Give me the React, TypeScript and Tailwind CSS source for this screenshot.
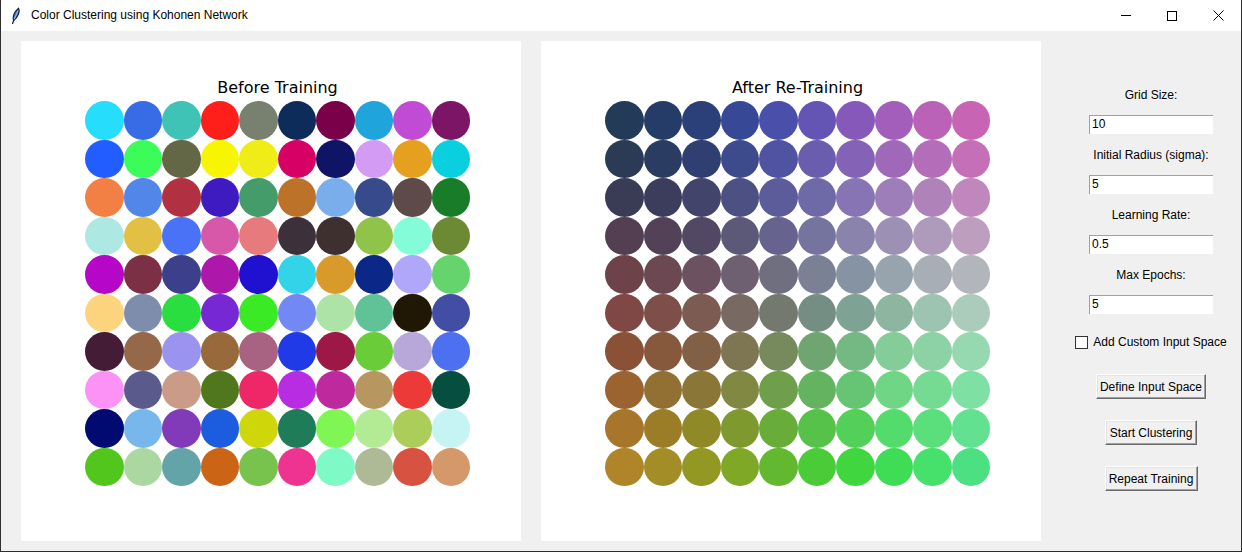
import React from "react";

const leftColors: string[][] = [
  ["#26DDFB", "#386BE6", "#3FC3B7", "#FF1F1A", "#788070", "#0E2C5A", "#7A0049", "#1FA5DB", "#C04BD4", "#7C1566"],
  ["#225DFF", "#3CFC5A", "#636745", "#F7F500", "#EFEC17", "#D70064", "#0F1466", "#D49BF5", "#E5A020", "#0ACFDE"],
  ["#F28045", "#5286E8", "#B13142", "#3E1AC1", "#449C6A", "#BD722A", "#7AADEC", "#364A8C", "#5D4A49", "#187C28"],
  ["#ADE8E2", "#E2C044", "#4A72F6", "#D757A8", "#E67A7C", "#3C303A", "#3E302F", "#8FC34A", "#84FCD8", "#6B8A33"],
  ["#B607C9", "#7B3045", "#3C3F8A", "#AD18AA", "#2011D0", "#33D4E8", "#D89A2B", "#0B2787", "#B0A6FA", "#66D46D"],
  ["#FDD47E", "#7F8DAD", "#29DE3E", "#7628D4", "#3AEA25", "#7288F5", "#ADE3A7", "#60C397", "#201805", "#424EA4"],
  ["#451C35", "#956849", "#9B93F0", "#986A3B", "#A86282", "#1F3AE6", "#9D1747", "#6BCC3A", "#B8A8DA", "#4D70F1"],
  ["#FD92F6", "#5B5A8C", "#CA9B86", "#51771C", "#EE2768", "#B92DE2", "#BE2A9E", "#B7975F", "#EB3A37", "#064E40"],
  ["#000A70", "#77B7EB", "#823BB8", "#1C5DE0", "#CFD609", "#1E7C59", "#7FF653", "#B3EB95", "#ADCD59", "#C6F3F4"],
  ["#53C61E", "#ABD8A0", "#63A4A8", "#CB6415", "#78C34E", "#EF3390", "#7FF9C6", "#ADBA95", "#D75241", "#D5986A"],
];

const rightColors: string[][] = [
  ["#233A58", "#263C68", "#2B4078", "#374896", "#4A4FAA", "#6455B5", "#8558BA", "#A35DBB", "#BA62B7", "#C764B4"],
  ["#2C3B55", "#2A3C62", "#2F3F71", "#3D4A8C", "#5052A2", "#6A5DAE", "#8462B6", "#9F68B8", "#B46DB8", "#C46FB8"],
  ["#3A3C55", "#3C3D5C", "#43446C", "#4C5083", "#5B5C99", "#6E69A7", "#8774B5", "#9E7EB9", "#B082BA", "#C087BC"],
  ["#533E52", "#524157", "#524863", "#5B5878", "#66648E", "#74749E", "#8A84AC", "#9C91B5", "#AE9BBB", "#BD9EBF"],
  ["#6E4249", "#6C4853", "#6C5260", "#6E6070", "#6F6F80", "#7B8195", "#8693A2", "#97A3AD", "#A8AEB6", "#B2B5BC"],
  ["#7F4844", "#7E4F48", "#7C5C52", "#786962", "#73796E", "#758E84", "#7EA394", "#8DB5A0", "#9DC4B0", "#ABCBBB"],
  ["#8B5136", "#86593D", "#826045", "#7E7652", "#768A5D", "#6FA570", "#74B884", "#84CC98", "#8DD2A4", "#96D9B0"],
  ["#9B6330", "#927033", "#8A7738", "#808842", "#6F9F4B", "#63B360", "#66C572", "#6ED685", "#76DB92", "#7EE0A2"],
  ["#A7762A", "#9B7D28", "#8F8927", "#7E9A2F", "#68AD39", "#57C249", "#52D058", "#53DB6C", "#5BDE7C", "#62E290"],
  ["#B08428", "#A28D26", "#929822", "#7EA826", "#62B82E", "#4ACB37", "#40D640", "#3EDD55", "#45E16B", "#4CE083"],
];

function CanvasPanel({ title, colors }: { title: string; colors: string[][] }) {
  return (
    <div className="w-[500px] h-[500px] bg-white pt-[37px] pl-[64px] shrink-0">
      <div className="w-[385px] h-[19px] leading-[19px] text-center text-[16px] text-black font-['DejaVu_Sans',sans-serif]">
        {title}
      </div>
      <div className="mt-[4px] grid grid-cols-[repeat(10,38.5px)] auto-rows-[38.5px]">
        {colors.flat().map((c, i) => (
          <div key={i} className="rounded-full" style={{ background: c }} />
        ))}
      </div>
    </div>
  );
}

function Label({ text, className = "" }: { text: string; className?: string }) {
  return <div className={"h-[20px] leading-[20px] text-[12px] text-black " + className}>{text}</div>;
}

function Entry({ value }: { value: string }) {
  return (
    <div className="mt-[10px] w-[124px] h-[19px] bg-white border-t border-l border-[#a0a0a0] border-r-white border-b-white text-[12px] leading-[17px] pl-[2px] text-black">
      {value}
    </div>
  );
}

function TkButton({ text, width, className = "" }: { text: string; width: string; className?: string }) {
  return (
    <div
      className={
        "h-[25px] flex items-center justify-center text-[12px] text-black bg-[#f0f0f0] border border-t-white border-l-white border-r-[#696969] border-b-[#696969] shadow-[inset_-1px_-1px_0_#a0a0a0,inset_1px_1px_0_#e3e3e3] " +
        width +
        " " +
        className
      }
    >
      {text}
    </div>
  );
}

export default function App() {
  return (
    <div className="w-[1242px] h-[552px] bg-[#f0f0f0] border-x border-b border-[#2e2e2e] flex flex-col font-['Liberation_Sans',Arial,sans-serif] overflow-hidden">
      {/* Title bar */}
      <div className="h-[31px] bg-white flex items-center shrink-0">
        <div className="w-[29px] h-[31px] flex items-center justify-center pl-[1px]">
          <svg width="16" height="18" viewBox="0 0 16 18">
            <path d="M4.6 16.5 L6 12.6" stroke="#15213a" strokeWidth="1.3" fill="none" strokeLinecap="round" />
            <path
              d="M5.6 13.6 C4.4 10.5 5.6 5.2 10.6 1.2 C12.2 4.2 10.4 9.8 5.6 13.6 Z"
              fill="#3f74cc"
              stroke="#111a30"
              strokeWidth="1.1"
              strokeLinejoin="round"
            />
            <path d="M6.2 12.4 L10 3.4" stroke="#bcd3f5" strokeWidth="0.8" fill="none" />
          </svg>
        </div>
        <div className="text-[12px] text-black leading-[31px] ml-[1px]">Color Clustering using Kohonen Network</div>
        <div className="flex-1" />
        <div className="w-[46px] h-[31px] flex items-center justify-center">
          <div className="w-[10px] h-px bg-black" />
        </div>
        <div className="w-[46px] h-[31px] flex items-center justify-center">
          <div className="w-[10px] h-[10px] border border-black" />
        </div>
        <div className="w-[46px] h-[31px] flex items-center justify-center">
          <svg width="11" height="11" viewBox="0 0 11 11">
            <path d="M0.5 0.5 L10.5 10.5 M10.5 0.5 L0.5 10.5" stroke="#000" strokeWidth="1" />
          </svg>
        </div>
      </div>

      {/* Body */}
      <div className="flex pt-[10px] pl-[20px] gap-[20px] h-[520px]">
        <CanvasPanel title="Before Training" colors={leftColors} />
        <CanvasPanel title="After Re-Training" colors={rightColors} />

        {/* Controls */}
        <div className="w-[200px] pl-[20px] pt-[44px] flex flex-col items-center shrink-0 -ml-[20px]">
          <Label text="Grid Size:" />
          <Entry value="10" />
          <Label text="Initial Radius (sigma):" className="mt-[11px]" />
          <Entry value="5" />
          <Label text="Learning Rate:" className="mt-[11px]" />
          <Entry value="0.5" />
          <Label text="Max Epochs:" className="mt-[11px]" />
          <Entry value="5" />
          <div className="mt-[18px] h-[20px] flex items-center gap-[5px]">
            <div className="w-[13px] h-[13px] bg-white border border-[#333333]" />
            <span className="text-[12px] text-black leading-[20px]">Add Custom Input Space</span>
          </div>
          <TkButton text="Define Input Space" width="w-[110px]" className="mt-[22px]" />
          <TkButton text="Start Clustering" width="w-[92px]" className="mt-[21px]" />
          <TkButton text="Repeat Training" width="w-[93px]" className="mt-[21px]" />
        </div>
      </div>
    </div>
  );
}
